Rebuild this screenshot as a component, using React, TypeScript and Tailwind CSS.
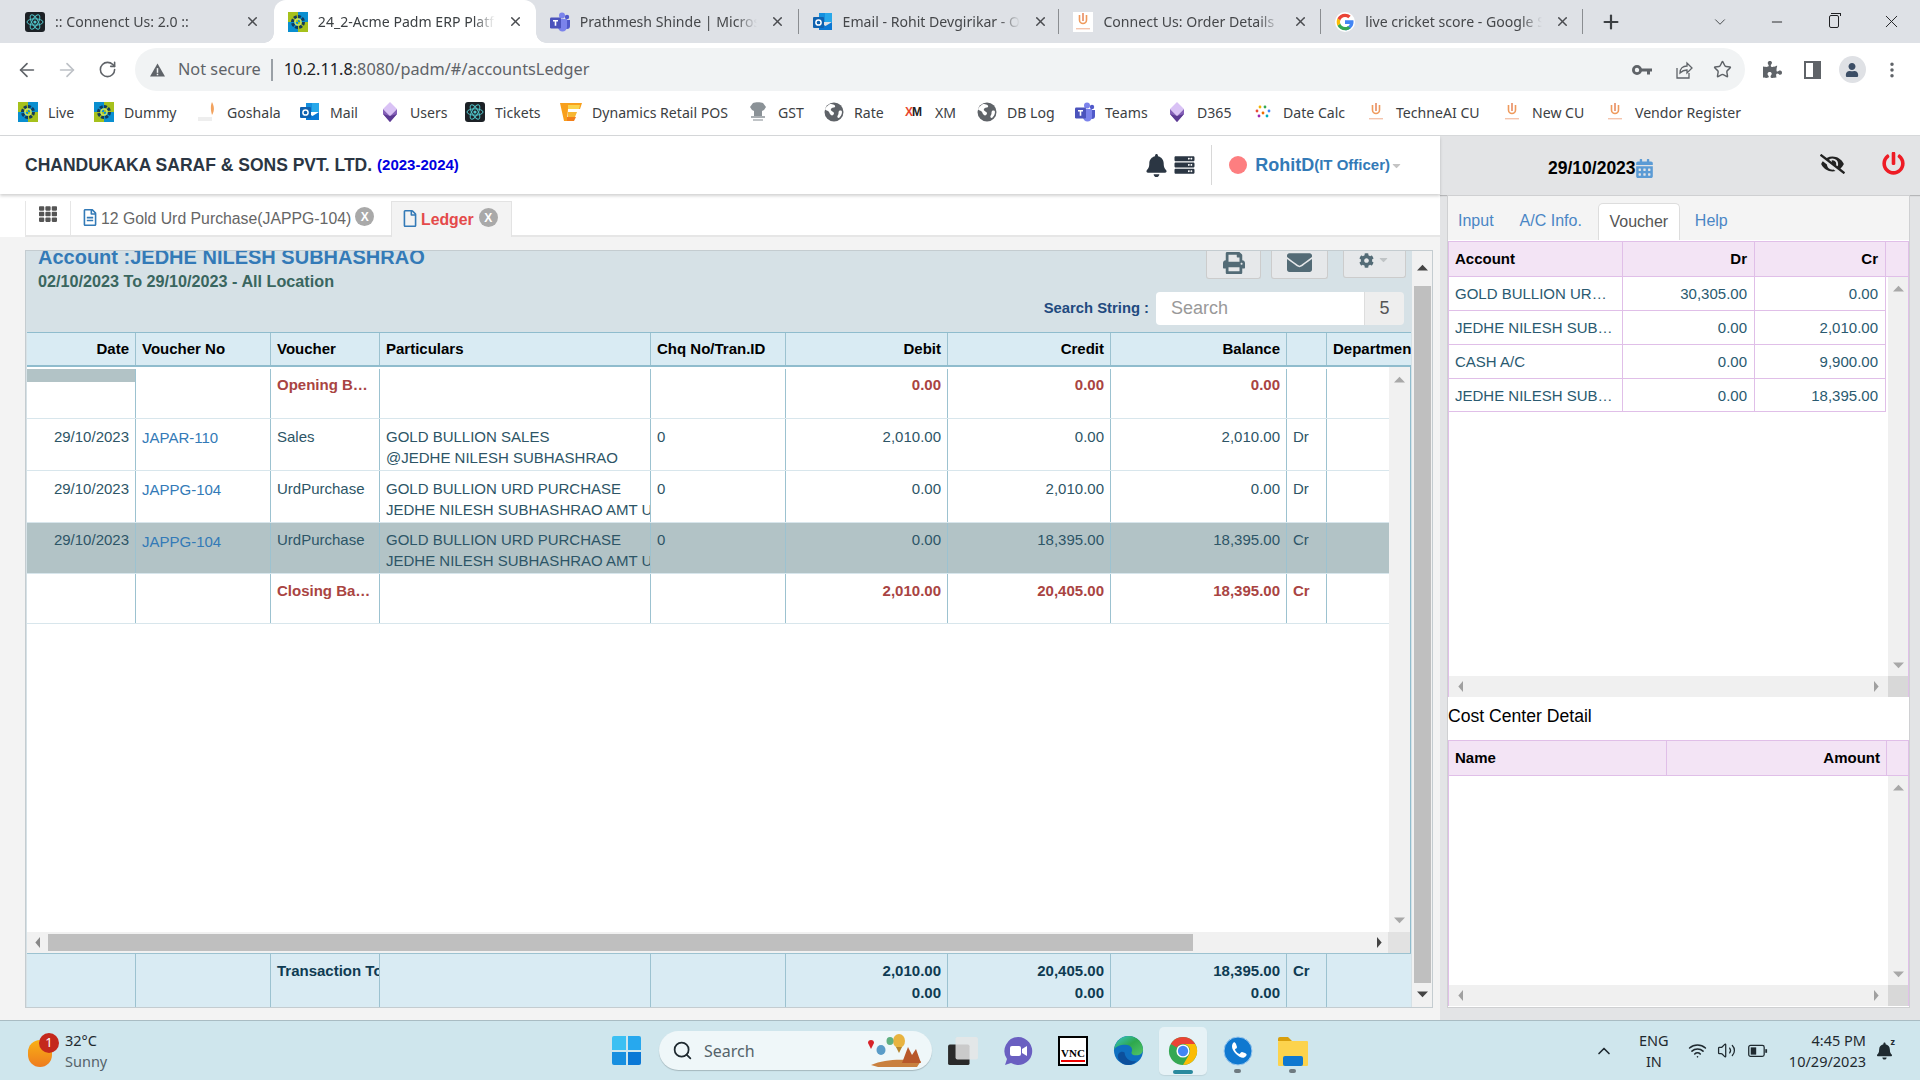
import React from "react";
import { ArrowLeft, ArrowRight, RotateCw, Star, MoreVertical, Plus, X, Minus, ChevronDown, ChevronUp, Search, Wifi, Volume2 } from "lucide-react";
import { FaBell, FaServer, FaPrint, FaEnvelope, FaCog, FaTh, FaRegFileAlt, FaRegFile, FaPowerOff, FaCalendarAlt, FaPuzzlePiece, FaUser, FaCaretDown, FaEyeSlash } from "react-icons/fa";

const chrome = "[font-family:Noto_Sans,sans-serif]";

function Acme({ flip = false }: { flip?: boolean }) {
  const a = flip ? "#0a8fd0" : "#a6c11c";
  const c = flip ? "#a6c11c" : "#0a8fd0";
  return (
    <svg viewBox="0 0 20 20" className="w-5 h-5 shrink-0">
      <rect x="0" y="0" width="10" height="10" fill={a} />
      <rect x="10" y="0" width="10" height="10" fill={flip ? "#a6c11c" : "#0a8fd0"} />
      <rect x="0" y="10" width="10" height="10" fill={c} />
      <rect x="10" y="10" width="10" height="10" fill={flip ? "#0a8fd0" : "#a6c11c"} />
      <circle cx="10" cy="10" r="5.5" fill="none" stroke="#123a5c" strokeWidth="3" strokeDasharray="3 1.2" />
      <circle cx="10" cy="10" r="3" fill="none" stroke="#c8e060" strokeWidth="1.4" />
    </svg>
  );
}
function ReactLogo() {
  return (
    <svg viewBox="0 0 20 20" className="w-5 h-5 shrink-0">
      <rect width="20" height="20" rx="3" fill="#1c2126" />
      <g fill="none" stroke="#4fc3c8" strokeWidth="1">
        <ellipse cx="10" cy="10" rx="8" ry="3.2" />
        <ellipse cx="10" cy="10" rx="8" ry="3.2" transform="rotate(60 10 10)" />
        <ellipse cx="10" cy="10" rx="8" ry="3.2" transform="rotate(120 10 10)" />
      </g>
      <circle cx="10" cy="10" r="1.6" fill="#4fc3c8" />
    </svg>
  );
}
function Teams() {
  return (
    <svg viewBox="0 0 20 20" className="w-5 h-5 shrink-0">
      <circle cx="12" cy="3.5" r="3" fill="#7b83eb" />
      <circle cx="17" cy="5" r="2.2" fill="#5059c9" />
      <path d="M14 8h6v6a3 3 0 0 1-6 0z" fill="#5059c9" />
      <path d="M7 7h10v8a4.5 4.5 0 0 1-9 0z" fill="#7b83eb" />
      <rect x="0" y="5.5" width="11" height="11" rx="1.2" fill="#4b53bc" />
      <path d="M3 8h5v1.4H6.3v4.4H4.7V9.4H3z" fill="#fff" />
    </svg>
  );
}
function Outlook() {
  return (
    <svg viewBox="0 0 20 20" className="w-5 h-5 shrink-0">
      <rect x="6" y="1" width="13" height="9" fill="#1490df" />
      <rect x="12" y="1" width="7" height="9" fill="#28a8ea" />
      <path d="M6 10l6.5 4L19 10v8H6z" fill="#0a78d4" />
      <rect x="0" y="5" width="11" height="11" rx="1" fill="#0f62b0" />
      <circle cx="5.5" cy="10.5" r="2.6" fill="none" stroke="#fff" strokeWidth="1.5" />
    </svg>
  );
}
function Diamond() {
  return (
    <svg viewBox="0 0 20 20" className="w-5 h-5 shrink-0">
      <path d="M10 0l7 7-7 7-7-7z" fill="#d9c2f5" />
      <path d="M3 7l7 7 7-7v5l-7 8-7-8z" fill="#8560b8" />
      <path d="M10 14l-7-2 7 8 7-8z" fill="#5b3a92" />
    </svg>
  );
}
function Goshala() {
  return (
    <svg viewBox="0 0 20 20" className="w-5 h-5 shrink-0">
      <path d="M15 0c2 4 3 8 0 13-1-4-2-8 0-13z" fill="#f2a25e" />
      <rect x="1" y="15" width="14" height="4" fill="#eeeeee" />
    </svg>
  );
}
function Dynamics() {
  return (
    <svg viewBox="0 0 22 20" className="w-[22px] h-5 shrink-0">
      <path d="M0 1h22l-2 6H8l-1 12H4z" fill="#f8a01c" />
      <path d="M8 3h12l-1 4H8z" fill="#fbd34c" />
      <path d="M8 10h9l-2 5H8z" fill="#f7b733" />
      <path d="M7 15h9l-2 4H7z" fill="#f27f1b" />
    </svg>
  );
}
function Emblem() {
  return (
    <svg viewBox="0 0 20 20" className="w-5 h-5 shrink-0">
      <path d="M5 1c2-1 8-1 10 0l3 4-2 3-2 1v5H6V9L4 8 2 5z" fill="#8b9297" />
      <rect x="3" y="14" width="14" height="2" fill="#a9aeb2" />
      <rect x="5" y="17" width="10" height="2" fill="#c0c4c7" />
    </svg>
  );
}
function Globe() {
  return (
    <svg viewBox="0 0 20 20" className="w-5 h-5 shrink-0">
      <circle cx="10" cy="10" r="9.5" fill="#5f6368" />
      <path d="M6 2c3 0 6 1 5 3-1 1-3 0-4 2-1 2 2 2 3 4 0 2-2 3-3 2-2-1-1-3-3-4-2-1-3-1-3-2 1-2 3-4 5-5zM15 9c2-1 3 0 3 1 0 3-2 5-3 6-2 0-2-2-1-3 1-1 0-3 1-4z" fill="#fff" />
    </svg>
  );
}
function XmLogo() {
  return (
    <span className="w-5 shrink-0 text-[12px] font-bold leading-none tracking-[-1px] [font-family:Liberation_Sans,sans-serif] text-[#222]">
      <span className="text-[#e8472e]">X</span>M
    </span>
  );
}
function ConnectUs({ cls = "w-5 h-5" }: { cls?: string }) {
  return (
    <svg viewBox="0 0 20 20" className={cls + " shrink-0"}>
      <rect width="20" height="20" fill="#ffffff" />
      <path d="M6.500 3v5a3.500 3.500 0 0 0 7 0V3" fill="none" stroke="#ef9a5c" strokeWidth="1.600" />
      <path d="M10 1v8" stroke="#e2703c" strokeWidth="1.300" />
      <rect x="3" y="16" width="14" height="1.400" fill="#f4c4ac" />
    </svg>
  );
}
function DateCalc() {
  const dots = [["#e94b35", 4, 9], ["#f4b400", 7, 5], ["#34a853", 12, 5], ["#4285f4", 16, 9], ["#9c27b0", 6, 14], ["#00acc1", 14, 14], ["#ef6c00", 10, 11]] as const;
  return (
    <svg viewBox="0 0 20 20" className="w-5 h-5 shrink-0">
      {dots.map(([c, x, y], i) => (
        <circle key={i} cx={x} cy={y} r="1.400" fill={c} />
      ))}
    </svg>
  );
}
function GoogleG() {
  return (
    <svg viewBox="0 0 48 48" className="w-5 h-5 shrink-0">
      <circle cx="24" cy="24" r="24" fill="#fff" />
      <path fill="#4285F4" d="M44 20H24v8.500h11.500C34.500 33 30 36 24 36v8c11 0 20.500-8 20.500-20 0-1.300-.2-2.700-.5-4z" />
      <path fill="#34A853" d="M24 44c5.500 0 10.100-1.800 13.500-4.900l-6.600-5.200C29 35.300 26.700 36 24 36c-5.300 0-9.700-3.500-11.300-8.300l-6.800 5.300C9.300 39.600 16.100 44 24 44z" />
      <path fill="#FBBC05" d="M12.700 27.700C12.300 26.500 12 25.300 12 24s.3-2.500.7-3.700l-6.800-5.300C4.700 17.700 4 20.800 4 24s.7 6.300 1.900 9z" />
      <path fill="#EA4335" d="M24 12c3 0 5.700 1 7.800 3l5.800-5.800C34.100 6 29.500 4 24 4 16.100 4 9.300 8.400 5.900 15l6.800 5.300C14.300 15.500 18.700 12 24 12z" />
    </svg>
  );
}
function Tri({ d, c = "#9a9a9a", cls = "" }: { d: "u" | "d" | "l" | "r"; c?: string; cls?: string }) {
  const p = { u: "0,8 6,1 12,8", d: "0,2 12,2 6,9", l: "9,0 9,12 2,6", r: "3,0 3,12 10,6" }[d];
  const box = d === "u" || d === "d" ? "w-[11px] h-[8px]" : "w-[8px] h-[11px]";
  return (
    <svg viewBox={d === "u" || d === "d" ? "0 0 12 10" : "0 0 12 12"} className={box + " shrink-0 " + cls} preserveAspectRatio="none">
      <polygon points={p} fill={c} />
    </svg>
  );
}

const tabs: { t: string; i: React.ReactNode; active?: boolean; sep?: boolean; w: string }[] = [
  { t: ":: Connenct Us: 2.0 ::", i: <ReactLogo />, w: "w-[263px]" },
  { t: "24_2-Acme Padm ERP Platform", i: <Acme />, active: true, w: "w-[262px]" },
  { t: "Prathmesh Shinde | Microsoft Teams", i: <Teams />, sep: true, w: "w-[263px]" },
  { t: "Email - Rohit Devgirikar - Outlook", i: <Outlook />, sep: true, w: "w-[261px]" },
  { t: "Connect Us: Order Details", i: <ConnectUs />, sep: true, w: "w-[262px]" },
  { t: "live cricket score - Google Search", i: <GoogleG />, sep: true, w: "w-[262px]" },
];

const bookmarks: { t: string; i: React.ReactNode; w: string }[] = [
  { t: "Live", i: <Acme />, w: "w-[76px]" },
  { t: "Dummy", i: <Acme flip />, w: "w-[103px]" },
  { t: "Goshala", i: <Goshala />, w: "w-[103px]" },
  { t: "Mail", i: <Outlook />, w: "w-[80px]" },
  { t: "Users", i: <Diamond />, w: "w-[85px]" },
  { t: "Tickets", i: <ReactLogo />, w: "w-[95px]" },
  { t: "Dynamics Retail POS", i: <Dynamics />, w: "w-[188px]" },
  { t: "GST", i: <Emblem />, w: "w-[76px]" },
  { t: "Rate", i: <Globe />, w: "w-[81px]" },
  { t: "XM", i: <XmLogo />, w: "w-[72px]" },
  { t: "DB Log", i: <Globe />, w: "w-[98px]" },
  { t: "Teams", i: <Teams />, w: "w-[92px]" },
  { t: "D365", i: <Diamond />, w: "w-[86px]" },
  { t: "Date Calc", i: <DateCalc />, w: "w-[113px]" },
  { t: "TechneAI CU", i: <ConnectUs />, w: "w-[136px]" },
  { t: "New CU", i: <ConnectUs />, w: "w-[103px]" },
  { t: "Vendor Register", i: <ConnectUs />, w: "w-[140px]" },
];

function TabStrip() {
  return (
    <div className={"flex h-[43px] bg-[#dee1e6] pl-[11px] text-[14.1px] text-[#45474a] " + chrome}>
      {tabs.map((tab) => (
        <div key={tab.t} className={"relative flex items-center pl-[14px] " + tab.w + (tab.active ? " bg-white rounded-t-[12px] text-[#3c4043]" : "")}>
          {tab.active && (
            <>
              <span className="absolute -left-[10px] bottom-0 w-[10px] h-[10px] bg-[radial-gradient(circle_at_0_0,#dee1e6_9.5px,#ffffff_10px)]" />
              <span className="absolute -right-[10px] bottom-0 w-[10px] h-[10px] bg-[radial-gradient(circle_at_100%_0,#dee1e6_9.5px,#ffffff_10px)]" />
            </>
          )}
          {tab.i}
          <span className="ml-[10px] w-[177px] overflow-hidden whitespace-nowrap [mask-image:linear-gradient(to_right,black_88%,transparent)]">{tab.t}</span>
          <X size={15} strokeWidth={2.4} className="ml-[13px] shrink-0 text-[#4a4c50]" />
          {tab.sep && <span className="absolute right-0 top-[9px] h-[25px] w-px bg-[#8a8d91]" />}
        </div>
      ))}
      <div className="w-[56px] flex items-center justify-center">
        <Plus size={22} strokeWidth={2.4} className="text-[#3c4043]" />
      </div>
      <div className="ml-[52px] w-[57px] flex items-center justify-center">
        <ChevronDown size={18} strokeWidth={1.2} className="text-[#3c4043]" />
      </div>
      <div className="w-[57px] flex items-center justify-center">
        <Minus size={16} strokeWidth={1.4} className="text-[#202124]" />
      </div>
      <div className="w-[57px] flex items-center justify-center">
        <div className="relative w-[10px] h-[13px] border border-[#202124] rounded-[2px]">
          <span className="absolute -top-[3px] left-[1px] w-[10px] h-[3px] border-t border-r border-[#202124]" />
        </div>
      </div>
      <div className="w-[58px] flex items-center justify-center">
        <X size={21} strokeWidth={1.1} className="text-[#202124]" />
      </div>
    </div>
  );
}

function Toolbar() {
  return (
    <div className={"flex h-[48px] bg-white pt-[5px] pl-[7px] " + chrome}>
      <div className="w-10 flex items-center justify-center"><ArrowLeft size={22} strokeWidth={1.8} className="text-[#5f6368]" /></div>
      <div className="w-10 flex items-center justify-center"><ArrowRight size={22} strokeWidth={1.8} className="text-[#bdc1c6]" /></div>
      <div className="w-10 flex items-center justify-center"><RotateCw size={19} strokeWidth={2} className="text-[#5f6368]" /></div>
      <div className="ml-[8px] w-[1610px] h-[43px] rounded-full bg-[#f1f3f4] flex items-center pl-[15px] pr-[13px]">
        <svg viewBox="0 0 16 14" className="w-[15px] h-[14px] shrink-0"><path d="M8 0l8 14H0z" fill="#5f6368" /><rect x="7.2" y="5" width="1.6" height="5" fill="#f1f3f4" /><rect x="7.2" y="11" width="1.6" height="1.6" fill="#f1f3f4" /></svg>
        <span className="ml-[13px] text-[16.3px] text-[#5f6368]">Not secure</span>
        <span className="ml-[10px] w-[2px] h-[22px] bg-[#9aa0a6]" />
        <span className="ml-[11px] text-[16.3px] text-[#5f6368] whitespace-nowrap"><span className="text-[#202124]">10.2.11.8</span>:8080/padm/#/accountsLedger</span>
        <svg viewBox="0 0 20 12" className="ml-auto w-[20px] h-[12px]">
          <circle cx="5" cy="6" r="3.600" fill="none" stroke="#5f6368" strokeWidth="2.800" />
          <path d="M9 4.500h11v3h-2v3h-3v-3H9z" fill="#5f6368" />
        </svg>
        <svg viewBox="0 0 20 20" className="ml-[21px] w-[20px] h-[20px]" fill="none" stroke="#5f6368" strokeWidth="1.3"><path d="M4 8v10h12v-5" /><path d="M7 13c0-5 3-7 7-7V3l5 5-5 5v-3c-3 0-5 1-7 3z" /></svg>
        <Star size={19} strokeWidth={1.8} className="ml-[20px] text-[#5f6368]" />
      </div>
      <div className="ml-[7px] w-10 flex items-center justify-center"><FaPuzzlePiece size={19} className="text-[#5f6368]" /></div>
      <div className="w-10 flex items-center justify-center">
        <div className="w-[17px] h-[18px] border-[2px] border-[#5f6368] flex justify-end"><span className="w-[6px] h-full bg-[#5f6368]" /></div>
      </div>
      <div className="w-10 flex items-center justify-center">
        <div className="w-[27px] h-[27px] rounded-full bg-[#dfe1e5] flex items-center justify-center"><FaUser size={14} className="text-[#3c4e66]" /></div>
      </div>
      <div className="w-10 flex items-center justify-center"><MoreVertical size={20} strokeWidth={2.2} className="text-[#5f6368]" /></div>
    </div>
  );
}

function Bookmarks() {
  return (
    <div className={"flex items-center h-[45px] pb-px bg-white border-b border-[#d6d8da] pl-[18px] text-[14.1px] text-[#3c4043] " + chrome}>
      {bookmarks.map((b) => (
        <div key={b.t} className={"flex items-center gap-[10px] shrink-0 " + b.w}>
          {b.i}
          <span className="whitespace-nowrap">{b.t}</span>
        </div>
      ))}
    </div>
  );
}

function AppHeader() {
  return (
    <div className="relative flex items-center h-[58px] pl-[25px] pr-[37px] bg-white shadow-[0_2px_3px_rgba(0,0,0,0.18)]">
      <span className="text-[17.5px] font-bold text-[#2b3643] whitespace-nowrap">CHANDUKAKA SARAF &amp; SONS PVT. LTD.</span>
      <span className="ml-[5px] text-[15px] font-bold text-[#0000e0] whitespace-nowrap">(2023-2024)</span>
      <FaBell className="ml-auto w-[21px] h-[23px] text-[#2b3643]" />
      <FaServer className="ml-[6px] w-[23px] h-[20px] text-[#2b3643]" />
      <span className="ml-[15px] w-px h-[40px] bg-[#d8d8d8]" />
      <span className="ml-[17px] w-[18px] h-[18px] rounded-full bg-[#fd7e80]" />
      <span className="ml-[8px] text-[18px] font-bold text-[#337ab7]">RohitD</span>
      <span className="text-[15px] font-bold text-[#337ab7] whitespace-nowrap">(IT Officer)</span>
      <FaCaretDown className="w-[13px] h-[13px] text-[#c4c4c4]" />
    </div>
  );
}

function SubTabs() {
  return (
    <div className="h-[43px] bg-white pt-[7px] pl-[25px]">
      <div className="flex h-[36px] border-b-[2px] border-[#e6e6e6] text-[15.8px]">
        <div className="w-[45px] border-l border-[#e6e6e6] flex justify-center pt-[4px] text-[#555]">
          <FaTh className="w-[20px] h-[18px]" />
        </div>
        <div className="flex items-start pt-[6px] w-[321px] pl-[12px] border-l border-[#e6e6e6]">
          <FaRegFileAlt className="mt-[2px] w-[14px] h-[17px] text-[#337ab7]" />
          <span className="ml-[4px] text-[#666] whitespace-nowrap">12 Gold Urd Purchase(JAPPG-104)</span>
          <span className="ml-[4px] w-[19px] h-[19px] rounded-full bg-[#a9a9a9] text-white text-[12px] font-bold flex items-center justify-center">X</span>
        </div>
        <div className="flex items-start pt-[6px] w-[121px] h-[36px] pl-[11px] bg-[#f3f3f3] border-x border-t border-[#e3e3e3]">
          <FaRegFile className="mt-[2px] w-[14px] h-[17px] text-[#337ab7]" />
          <span className="ml-[4px] font-bold text-[#e44a4a]">Ledger</span>
          <span className="ml-[5px] w-[19px] h-[19px] rounded-full bg-[#a9a9a9] text-white text-[12px] font-bold flex items-center justify-center">X</span>
        </div>
      </div>
    </div>
  );
}

const headCols = "grid grid-cols-[109px_135px_109px_271px_135px_162px_163px_176px_40px_84px]";
const bodyCols = "grid grid-cols-[109px_135px_109px_271px_135px_162px_163px_176px_40px_62px]";
const vb = "border-r border-[#9cc2d0]";

type Row = { d: string; n: string; v: string; p: string[]; ch: string; dr: string; cr: string; bal: string; t: string; strong?: boolean; sel?: boolean; h: string; pt: string };
const rows: Row[] = [
  { d: "", n: "", v: "Opening Balance", p: [], ch: "", dr: "0.00", cr: "0.00", bal: "0.00", t: "", strong: true, h: "h-[50px] mt-[2px]", pt: "pt-[5px]" },
  { d: "29/10/2023", n: "JAPAR-110", v: "Sales", p: ["GOLD BULLION SALES", "@JEDHE NILESH SUBHASHRAO"], ch: "0", dr: "2,010.00", cr: "0.00", bal: "2,010.00", t: "Dr", h: "h-[52px]", pt: "pt-[7px]" },
  { d: "29/10/2023", n: "JAPPG-104", v: "UrdPurchase", p: ["GOLD BULLION URD PURCHASE", "JEDHE NILESH SUBHASHRAO AMT UPDATED"], ch: "0", dr: "0.00", cr: "2,010.00", bal: "0.00", t: "Dr", h: "h-[52px]", pt: "pt-[7px]" },
  { d: "29/10/2023", n: "JAPPG-104", v: "UrdPurchase", p: ["GOLD BULLION URD PURCHASE", "JEDHE NILESH SUBHASHRAO AMT UPDATED"], ch: "0", dr: "0.00", cr: "18,395.00", bal: "18,395.00", t: "Cr", sel: true, h: "h-[51px]", pt: "pt-[6px]" },
  { d: "", n: "", v: "Closing Balance", p: [], ch: "", dr: "2,010.00", cr: "20,405.00", bal: "18,395.00", t: "Cr", strong: true, h: "h-[50px]", pt: "pt-[6px]" },
];

function LedgerRow({ r, first }: { r: Row; first: boolean }) {
  const tone = r.strong ? "font-bold text-[#a94442]" : "text-[#2d5566]";
  const cell = "px-[6px] overflow-hidden whitespace-nowrap h-full " + r.pt + " " + vb + " " + tone;
  const right = cell + " text-right";
  return (
    <div className={bodyCols + " leading-[21px] border-b border-[#d8e6ec] " + r.h + (r.sel ? " bg-[#b2c3c6]" : "")}>
      {first ? (
        <div className={"h-full " + vb}><div className="h-[13px] bg-[#b2c3c6]" /></div>
      ) : (
        <div className={right}>{r.d}</div>
      )}
      <div className={"px-[6px] pt-[8px] h-full " + vb + " text-[#337ab7]"}>{r.n}</div>
      <div className={cell + " truncate"}>{r.v}</div>
      <div className={"pl-[6px] overflow-hidden whitespace-nowrap h-full " + r.pt + " " + vb + " " + tone}>
        {r.p.map((l) => (
          <div key={l}>{l}</div>
        ))}
      </div>
      <div className={cell}>{r.ch}</div>
      <div className={right}>{r.dr}</div>
      <div className={right}>{r.cr}</div>
      <div className={right}>{r.bal}</div>
      <div className={cell}>{r.t}</div>
      <div className="h-full" />
    </div>
  );
}

function LedgerPanel() {
  return (
    <div className="flex w-[1408px] h-[758px] border border-[#c4ccd0] bg-[#f1f1f1] text-[15px]">
      <div className="w-[1386px] flex flex-col pl-px bg-[#d6e1e6]">
        <div className="h-[81px] flex justify-between overflow-hidden">
          <div className="pl-[11px]">
            <div className="text-[20px] leading-[22px] -mt-[5px] font-bold text-[#337ab7] whitespace-nowrap">Account :JEDHE NILESH SUBHASHRAO</div>
            <div className="text-[16.2px] leading-[20px] mt-[3px] font-bold text-[#3a665f] whitespace-nowrap">02/10/2023 To 29/10/2023 - All Location</div>
          </div>
          <div className="flex flex-col items-end pr-[7px]">
            <div className="flex items-start h-[41px] -mr-px">
              <div className="w-[55px] h-[28px] pb-[4px] bg-[#e6e8ea] border border-t-0 border-[#ccc] rounded-b-[3px] flex items-center justify-center text-[#536b76]"><FaPrint className="w-[22px] h-[22px]" /></div>
              <div className="ml-[10px] w-[57px] h-[28px] pb-[4px] bg-[#e6e8ea] border border-t-0 border-[#ccc] rounded-b-[3px] flex items-center justify-center text-[#536b76]"><FaEnvelope className="w-[25px] h-[25px]" /></div>
              <div className="ml-[15px] w-[63px] h-[27px] bg-[#e6e8ea] border border-t-0 border-[#ccc] rounded-b-[3px] flex items-start pt-[2px] justify-center gap-[3px] text-[#536b76]"><FaCog className="w-[15px] h-[15px]" /><FaCaretDown className="w-[13px] h-[13px] text-[#c0c4c6]" /></div>
            </div>
            <div className="flex items-center mr-px">
              <span className="text-[14.8px] font-bold text-[#1f4a7f] mr-[7px] whitespace-nowrap">Search String :</span>
              <div className="w-[208px] h-[33px] bg-white rounded-l-[4px] pl-[15px] flex items-center text-[18px] text-[#999]">Search</div>
              <div className="w-[40px] h-[33px] bg-[#eeeeee] rounded-r-[4px] border-l border-[#ddd] flex items-center justify-center text-[18px] text-[#555]">5</div>
            </div>
          </div>
        </div>
        <div className={headCols + " w-[1384px] h-[35px] bg-[#d9ebf3] border-t border-b-2 border-[#8fbccd] font-bold text-black items-center"}>
          {["Date", "Voucher No", "Voucher", "Particulars", "Chq No/Tran.ID", "Debit", "Credit", "Balance", "", "Department"].map((h, i) => (
            <div key={i} className={"h-full flex items-center px-[6px] overflow-hidden whitespace-nowrap " + (i < 9 ? vb + " " : "") + (i === 0 || (i >= 5 && i <= 7) ? "justify-end" : "")}>{h}</div>
          ))}
        </div>
        <div className="flex w-[1384px] h-[565px] bg-white border-r border-[#8fbccd]">
          <div className="w-[1362px]">
            {rows.map((r, i) => (
              <LedgerRow key={i} r={r} first={i === 0} />
            ))}
          </div>
          <div className="w-[21px] bg-[#f1f1f1] flex flex-col items-center justify-between pt-[9px] pb-[8px]">
            <Tri d="u" c="#a8a8a8" />
            <Tri d="d" c="#a8a8a8" />
          </div>
        </div>
        <div className="flex items-center w-[1384px] h-[21px] bg-[#f1f1f1] border-r border-[#8fbccd]">
          <div className="w-[21px] flex justify-center"><Tri d="l" c="#888" /></div>
          <div className="w-[1145px] h-[17px] bg-[#bfbfbf]" />
          <div className="w-[195px] flex justify-end pr-[5px]"><Tri d="r" c="#444" /></div>
          <div className="w-[22px] h-full bg-[#e2e2e2]" />
        </div>
        <div className={headCols + " w-[1384px] h-[54px] bg-[#d9ebf3] font-bold text-[#0f3b52] leading-[22px] border-t border-[#9cc2d0]"}>
          {[[""], [""], ["Transaction Total"], [""], [""], ["2,010.00", "0.00"], ["20,405.00", "0.00"], ["18,395.00", "0.00"], ["Cr"], [""]].map((c, i) => (
            <div key={i} className={"h-full px-[6px] pt-[6px] overflow-hidden whitespace-nowrap " + (i < 9 ? vb + " " : "") + (i >= 5 && i <= 7 ? "text-right" : "")}>
              {c.map((l, j) => (
                <div key={j}>{l}</div>
              ))}
            </div>
          ))}
        </div>
      </div>
      <div className="w-[20px] flex flex-col items-center bg-[#f1f1f1]">
        <Tri d="u" c="#444" cls="mt-[13px]" />
        <div className="mt-[14px] w-[17px] h-[697px] bg-[#bfbfbf]" />
        <Tri d="d" c="#444" cls="mt-[7px]" />
      </div>
    </div>
  );
}

const pb = "border-[#e0bfe8]";
const vouchers = [
  ["GOLD BULLION URD PURCHASE", "30,305.00", "0.00", "h-[34px]"],
  ["JEDHE NILESH SUBHASHRAO", "0.00", "2,010.00", "h-[34px]"],
  ["CASH A/C", "0.00", "9,900.00", "h-[34px]"],
  ["JEDHE NILESH SUBHASHRAO", "0.00", "18,395.00", "h-[33px]"],
];

function HScroll() {
  return (
    <div className="h-[21px] flex bg-[#f0f0f0] shrink-0">
      <div className="w-[440px] flex items-center justify-between px-[8px]">
        <Tri d="l" c="#a0a0a0" />
        <Tri d="r" c="#a0a0a0" />
      </div>
      <div className="w-[20px] bg-[#d8d8d8]" />
    </div>
  );
}

function RightPanel() {
  return (
    <div className="w-[480px] h-[884px] bg-[#e3e4e6] text-[15px]">
      <div className="h-[59px] flex items-center pl-[108px] pr-[15px] shadow-[0_1px_1px_rgba(0,0,0,0.2)]">
        <span className="mt-[5px] text-[17.5px] font-bold text-black">29/10/2023</span>
        <FaCalendarAlt className="mt-[5px] w-[17px] h-[19px] text-[#5b9bd5]" />
        <FaEyeSlash className="ml-auto -mt-[3px] w-[25px] h-[20px] text-[#222]" />
        <FaPowerOff className="ml-[37px] -mt-[5px] w-[23px] h-[23px] text-[#ee1c25]" />
      </div>
      <div className="ml-[7px] w-[463px] h-[813px] border border-[#cfd0d2] bg-white flex flex-col">
        <div className="h-[44px] bg-[#f4f4f4] flex items-end text-[16px] text-[#4a86c5] shrink-0">
          <span className="ml-[10px] mb-[7px]">Input</span>
          <span className="ml-[26px] mb-[7px]">A/C Info.</span>
          <div className="ml-[16px] w-[82px] h-[37px] bg-white border border-b-0 border-[#dddddd] rounded-t-[5px] flex items-center justify-center text-[#555]">Voucher</div>
          <span className="ml-[15px] mb-[7px]">Help</span>
        </div>
        <div className={"mt-px h-[456px] border-x " + pb + " flex flex-col"}>
          <div className={"grid grid-cols-[174px_132px_131px_23px] h-[36px] bg-[#f3e4f5] border-y " + pb + " font-bold text-black shrink-0"}>
            <div className={"flex items-center px-[6px] border-r " + pb}>Account</div>
            <div className={"flex items-center justify-end px-[7px] border-r " + pb}>Dr</div>
            <div className={"flex items-center justify-end px-[7px] border-r " + pb}>Cr</div>
            <div />
          </div>
          <div className="flex flex-1">
            <div className="w-[440px]">
              {vouchers.map((v, i) => (
                <div key={i} className={"grid grid-cols-[174px_132px_131px] text-[#2a5a70] " + v[3]}>
                  <div className={"flex items-center pt-[2px] pl-[6px] pr-[8px] border-r border-b overflow-hidden " + pb}><span className="truncate">{v[0]}</span></div>
                  <div className={"flex items-center justify-end pt-[2px] px-[7px] border-r border-b " + pb}>{v[1]}</div>
                  <div className={"flex items-center justify-end pt-[2px] px-[7px] border-r border-b " + pb}>{v[2]}</div>
                </div>
              ))}
            </div>
            <div className="w-[20px] bg-[#f0f0f0] flex flex-col items-center justify-between pt-[8px] pb-[7px]">
              <Tri d="u" c="#a8a8a8" />
              <Tri d="d" c="#a8a8a8" />
            </div>
          </div>
          <HScroll />
        </div>
        <div className="h-[43px] pb-[4px] flex items-center text-[17.6px] text-black shrink-0">Cost Center Detail</div>
        <div className={"h-[266px] border-x " + pb + " flex flex-col"}>
          <div className={"grid grid-cols-[218px_220px_22px] h-[36px] bg-[#f3e4f5] border-y " + pb + " font-bold text-black shrink-0"}>
            <div className={"flex items-center px-[6px] border-r " + pb}>Name</div>
            <div className={"flex items-center justify-end px-[6px] border-r " + pb}>Amount</div>
            <div />
          </div>
          <div className="flex flex-1">
            <div className="w-[440px]" />
            <div className="w-[20px] bg-[#f0f0f0] flex flex-col items-center justify-between pt-[8px] pb-[7px]">
              <Tri d="u" c="#a8a8a8" />
              <Tri d="d" c="#a8a8a8" />
            </div>
          </div>
          <HScroll />
        </div>
      </div>
    </div>
  );
}

function TaskbarIcons() {
  return (
    <div className="flex items-center">
      <svg viewBox="0 0 32 30" className="ml-[16px] w-[30px] h-[28px]">
        <rect x="0" y="8" width="23" height="22" rx="2" fill="#2a2a2a" />
        <rect x="8" y="0" width="24" height="24" rx="2" fill="#e6e6e6" fillOpacity="0.85" />
      </svg>
      <svg viewBox="0 0 30 30" className="ml-[25px] w-[30px] h-[30px]">
        <path d="M15 1a14 14 0 1 1-7 26l-6 2 2-6A14 14 0 0 1 15 1z" fill="#6a5fc1" />
        <rect x="7" y="10" width="11" height="10" rx="2" fill="#fff" />
        <path d="M19 13l5-3v10l-5-3z" fill="#fff" />
      </svg>
      <div className="ml-[25px] w-[30px] h-[30px] bg-white border-[2px] border-black flex flex-col items-center justify-end leading-none overflow-hidden [font-family:Liberation_Serif,serif]">
        <span className="text-[11px] font-bold text-black">VNC</span>
        <span className="w-[24px] h-[2px] mt-px mb-[2px] bg-[#e00]" />
      </div>
      <svg viewBox="0 0 32 32" className="ml-[25px] w-[31px] h-[31px]">
        <defs><linearGradient id="ed" x1="0" y1="0" x2="1" y2="1"><stop offset="0" stopColor="#37c6d0" /><stop offset="0.5" stopColor="#2ea84d" /><stop offset="1" stopColor="#52c46a" /></linearGradient></defs>
        <circle cx="16" cy="16" r="15" fill="#0f6fc0" />
        <path d="M1 16C2 6 9 1 16 1c9 0 15 7 15 14 0 4-3 6-7 6-3 0-5-1-5-3 2-3 0-8-6-8-6 0-11 2-12 6z" fill="url(#ed)" />
        <path d="M12 18c0 6 6 10 12 9-2 2-5 4-8 4-7 0-11-5-11-9 0-3 3-6 7-4z" fill="#0c4f9c" />
      </svg>
      <div className="ml-[15px] relative w-[48px] h-[48px] rounded-[5px] bg-[#e6f2f6] flex items-center justify-center shadow-[0_1px_1px_rgba(0,0,0,0.08)]">
        <svg viewBox="0 0 32 32" className="w-[30px] h-[30px]">
          <circle cx="16" cy="16" r="15" fill="#34a853" />
          <path d="M16 1a15 15 0 0 1 13 7.500H16a7.500 7.500 0 0 0-6.500 3.750L3 8.500A15 15 0 0 1 16 1z" fill="#ea4335" />
          <path d="M29 8.500A15 15 0 0 1 16 31l6.500-11.250A7.500 7.500 0 0 0 16 8.500z" fill="#fbbc05" />
          <circle cx="16" cy="16" r="7" fill="#fff" />
          <circle cx="16" cy="16" r="5.500" fill="#4285f4" />
        </svg>
        <span className="absolute bottom-px left-[14px] w-[20px] h-[4px] rounded-full bg-[#2a8a9e]" />
      </div>
      <div className="ml-[16px] relative">
        <svg viewBox="0 0 30 30" className="w-[30px] h-[30px]">
          <circle cx="15" cy="15" r="14" fill="#0f78d0" stroke="#9bc8ee" strokeWidth="1" />
          <path d="M10 7c1-1 2-1 3 1l1 3c0 1-1 2-2 2 0 2 3 5 5 5 0-1 1-2 2-2l3 1c2 1 2 2 1 3-2 3-6 2-10-2-4-4-5-8-3-11z" fill="#fff" />
        </svg>
        <span className="absolute -bottom-[7px] left-[11px] w-[7px] h-[4px] rounded-full bg-[#6e7a80]" />
      </div>
      <div className="ml-[25px] relative">
        <svg viewBox="0 0 30 30" className="w-[30px] h-[30px]">
          <path d="M0 3a2 2 0 0 1 2-2h8l4 4H0z" fill="#d99f0c" />
          <rect x="0" y="5" width="30" height="25" rx="1" fill="#fcd34d" />
          <rect x="5" y="20" width="20" height="10" rx="2" fill="#0f78d0" />
        </svg>
        <span className="absolute -bottom-[7px] left-[11px] w-[7px] h-[4px] rounded-full bg-[#6e7a80]" />
      </div>
    </div>
  );
}

function Taskbar() {
  return (
    <div className={"h-[60px] flex items-center bg-[#cfe6ed] border-t border-[#a9bcc3] " + chrome}>
      <div className="w-[612px] pl-[28px] flex items-center shrink-0">
        <div className="relative w-[24px] h-[32px]">
          <span className="absolute left-0 top-[5px] w-[24px] h-[27px] rounded-full bg-[linear-gradient(180deg,#f9b115,#ee7b1e)]" />
          <span className="absolute left-[11px] -top-[2px] w-[20px] h-[20px] rounded-full bg-[#c4281c] text-white text-[13px] flex items-center justify-center">1</span>
        </div>
        <div className="ml-[13px] text-[14.5px] leading-[21px] text-[#1f2a30]">
          <div>32°C</div>
          <div className="text-[#55636a]">Sunny</div>
        </div>
      </div>
      <div className="grid grid-cols-2 gap-[2px] w-[29px] h-[29px] shrink-0">
        <span className="bg-[#3cc0f3] rounded-tl-[2px]" />
        <span className="bg-[#27a8ee] rounded-tr-[2px]" />
        <span className="bg-[#178fe0] rounded-bl-[2px]" />
        <span className="bg-[#0a78d6] rounded-br-[2px]" />
      </div>
      <div className="ml-[18px] w-[273px] h-[39px] rounded-full bg-[#eff7f9] shadow-[0_1px_1px_rgba(0,0,0,0.2)] flex items-center pl-[13px] overflow-hidden shrink-0">
        <Search size={21} strokeWidth={2} className="text-[#1f2a30]" />
        <span className="ml-[11px] text-[16px] text-[#55636a]">Search</span>
        <svg viewBox="0 0 62 36" className="ml-auto mr-[4px] w-[62px] h-[36px]">
          <ellipse cx="33" cy="8" rx="6" ry="7" fill="#e8b33f" />
          <path d="M30 14l3 6 3-6z" fill="#b5832a" />
          <ellipse cx="24" cy="8" rx="3.500" ry="4" fill="#60b080" />
          <path d="M2 10a3 3 0 1 1 6 0l-3 6z" fill="#d8232a" />
          <ellipse cx="15" cy="17" rx="4.500" ry="5" fill="#5a9cc8" />
          <path d="M5 32c14-6 30-6 50-4l-4 6H12z" fill="#c9803f" />
          <path d="M36 30l6-16 4 8 4-6 5 14z" fill="#b8582b" />
        </svg>
      </div>
      <TaskbarIcons />
      <div className="ml-auto flex items-center text-[#1f2a30] text-[14.5px] shrink-0">
        <ChevronUp size={20} strokeWidth={2} className="mr-[16px]" />
        <div className="w-[48px] text-center leading-[21px] mr-[10px]">
          <div>ENG</div>
          <div>IN</div>
        </div>
        <Wifi size={19} strokeWidth={2} />
        <Volume2 size={19} strokeWidth={1.6} className="ml-[10px]" />
        <svg viewBox="0 0 22 14" className="ml-[12px] w-[20px] h-[14px]"><rect x="0.800" y="0.800" width="17" height="12" rx="2" fill="none" stroke="#1f2a30" strokeWidth="1.400" /><rect x="3" y="3" width="6" height="8" fill="#1f2a30" /><rect x="19" y="5" width="2" height="4" fill="#1f2a30" /></svg>
        <div className="ml-[21px] text-right leading-[21px] whitespace-nowrap">
          <div>4:45 PM</div>
          <div>10/29/2023</div>
        </div>
        <div className="ml-[11px] mr-[28px] relative">
          <FaBell className="w-[15px] h-[18px] text-[#1f2a30]" />
          <span className="absolute -top-[5px] -right-[3px] text-[9px] font-bold leading-none">z</span>
        </div>
      </div>
    </div>
  );
}

export default function App() {
  return (
    <div className="w-[1920px] h-[1080px] overflow-hidden flex flex-col [font-family:Liberation_Sans,sans-serif]">
      <TabStrip />
      <Toolbar />
      <Bookmarks />
      <div className="flex h-[884px]">
        <div className="w-[1440px] flex flex-col">
          <AppHeader />
          <SubTabs />
          <div className="flex-1 bg-[#f3f3f3] pt-[13px] pl-[25px]">
            <LedgerPanel />
          </div>
        </div>
        <RightPanel />
      </div>
      <Taskbar />
    </div>
  );
}
